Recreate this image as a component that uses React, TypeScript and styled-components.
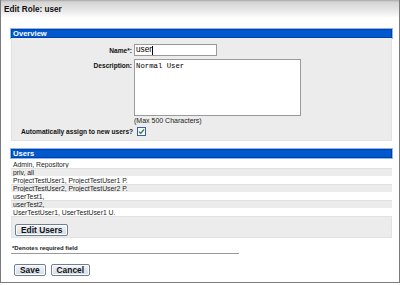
import React from 'react';
import styled, { createGlobalStyle } from 'styled-components';

const GlobalStyle = createGlobalStyle`
  html, body {
    margin: 0;
    padding: 0;
    background: #ffffff;
  }
  body {
    font-family: "Liberation Sans", Arial, sans-serif;
    color: #000;
  }
`;

const Frame = styled.div`
  width: 400px;
  height: 283px;
  box-sizing: border-box;
  border: 1px solid #7c7c7c;
  border-top: none;
  background: #fff;
  display: flex;
  flex-direction: column;
`;

const TitleBar = styled.div`
  height: 18px;
  padding-left: 3px;
  display: flex;
  align-items: center;
  font-size: 8.2px;
  font-weight: bold;
  color: #111;
  background: linear-gradient(#a8a8a8 0, #d4d4d4 2px, #e2e2e2 8px, #f2f2f2 14px, #ffffff 18px);
`;

const Content = styled.div`
  padding: 11px 7px 0 10px;
  display: flex;
  flex-direction: column;
`;

const SectionHeader = styled.div<{ $gap?: number }>`
  height: 9px;
  margin-top: ${p => p.$gap ?? 0}px;
  box-sizing: border-box;
  background: #0058cc;
  border: 1px solid #0043a8;
  box-shadow: 0 0 0 1px #8fb6ee;
  color: #fff;
  font-size: 7.6px;
  font-weight: bold;
  line-height: 7px;
  padding-left: 1px;
`;

const Panel = styled.div`
  background: #ececec;
  border: 1px solid #e2e2e2;
  border-top: none;
`;

const FormGrid = styled.div`
  display: grid;
  grid-template-columns: 120px 1fr;
  column-gap: 2px;
  row-gap: 3px;
  padding-top: 6px;
`;

const Label = styled.label`
  font-size: 6.6px;
  font-weight: bold;
  text-align: right;
  padding-top: 3px;
  color: #111;
`;

const TextInput = styled.div`
  width: 83px;
  height: 12px;
  box-sizing: border-box;
  border: 1px solid #9a9a9a;
  background: #fff;
  font-size: 8.2px;
  line-height: 10px;
  padding-left: 1px;
  display: flex;
  align-items: center;
`;

const Caret = styled.span`
  display: inline-block;
  width: 1px;
  height: 9px;
  background: #000;
`;

const TextArea = styled.div`
  width: 167px;
  height: 57px;
  box-sizing: border-box;
  border: 1px solid #9a9a9a;
  background: #fff;
  font-family: "Liberation Mono", "Courier New", monospace;
  font-size: 7.3px;
  padding: 2px 1px;
`;

const Hint = styled.div`
  font-size: 7px;
  line-height: 7px;
  margin-top: -2px;
  color: #222;
`;

const CheckRow = styled.div`
  display: flex;
  align-items: center;
  gap: 4px;
  padding: 3px 0 4px 9px;
`;

const CheckLabel = styled.span`
  font-size: 6.6px;
  font-weight: bold;
  color: #111;
`;

const CheckBox = styled.span`
  width: 9px;
  height: 9px;
  box-sizing: border-box;
  border: 1px solid #3a5f99;
  background: #f4f7fb;
  display: flex;
  align-items: center;
  justify-content: center;
`;

const UserList = styled.div`
  display: flex;
  flex-direction: column;
  margin-top: 2px;
`;

const UserRow = styled.div<{ $striped: boolean }>`
  height: 8px;
  line-height: 8px;
  font-size: 6.8px;
  padding-left: 2px;
  color: #222;
  background: ${p => (p.$striped ? '#ececec' : '#fff')};
  border-top: 1px solid ${p => (p.$striped ? '#e0e0e0' : 'transparent')};
  box-sizing: border-box;
`;

const ActionPanel = styled(Panel)`
  border-top: 1px solid #e2e2e2;
  padding: 6px 0 1px 3px;
  height: 22px;
  box-sizing: border-box;
  display: flex;
  align-items: flex-end;
`;

const Button = styled.button`
  font-family: "Liberation Sans", Arial, sans-serif;
  font-size: 8.4px;
  font-weight: bold;
  color: #111;
  height: 12px;
  padding: 0 5px;
  line-height: 10px;
  border: 1px solid #6f7f96;
  border-radius: 2px;
  background: linear-gradient(#f2f5f9, #d3dce8);
  box-shadow: inset 0 0 0 1px #fff;
`;

const Required = styled.div`
  margin-top: 7px;
  width: 227px;
  font-size: 6px;
  font-weight: bold;
  line-height: 7px;
  padding-left: 1px;
  padding-bottom: 1px;
  border-bottom: 1px solid #9a9a9a;
  color: #222;
`;

const ButtonRow = styled.div`
  display: flex;
  gap: 5px;
  padding-left: 3px;
  margin-top: 10px;
`;

const users = [
  'Admin, Repository',
  'priv, all',
  'ProjectTestUser1, ProjectTestUser1 P.',
  'ProjectTestUser2, ProjectTestUser2 P.',
  'userTest1,',
  'userTest2,',
  'UserTestUser1, UserTestUser1 U.',
];

const App: React.FC = () => (
  <>
    <GlobalStyle />
    <Frame>
      <TitleBar>Edit Role: user</TitleBar>
      <Content>
        <SectionHeader>Overview</SectionHeader>
        <Panel>
          <FormGrid>
            <Label>Name*:</Label>
            <TextInput>
              user
              <Caret />
            </TextInput>
            <Label>Description:</Label>
            <TextArea>Normal User</TextArea>
            <span />
            <Hint>(Max 500 Characters)</Hint>
          </FormGrid>
          <CheckRow>
            <CheckLabel>Automatically assign to new users?</CheckLabel>
            <CheckBox>
              <svg width="7" height="7" viewBox="0 0 7 7">
                <path d="M1 3.6 L2.8 5.4 L6 1.4" fill="none" stroke="#1f7a3a" strokeWidth="1.3" />
              </svg>
            </CheckBox>
          </CheckRow>
        </Panel>

        <SectionHeader $gap={8}>Users</SectionHeader>
        <UserList>
          {users.map((u, i) => (
            <UserRow key={u} $striped={i % 2 === 1}>
              {u}
            </UserRow>
          ))}
        </UserList>
        <ActionPanel>
          <Button>Edit Users</Button>
        </ActionPanel>

        <Required>*Denotes required field</Required>
        <ButtonRow>
          <Button>Save</Button>
          <Button>Cancel</Button>
        </ButtonRow>
      </Content>
    </Frame>
  </>
);

export default App;
